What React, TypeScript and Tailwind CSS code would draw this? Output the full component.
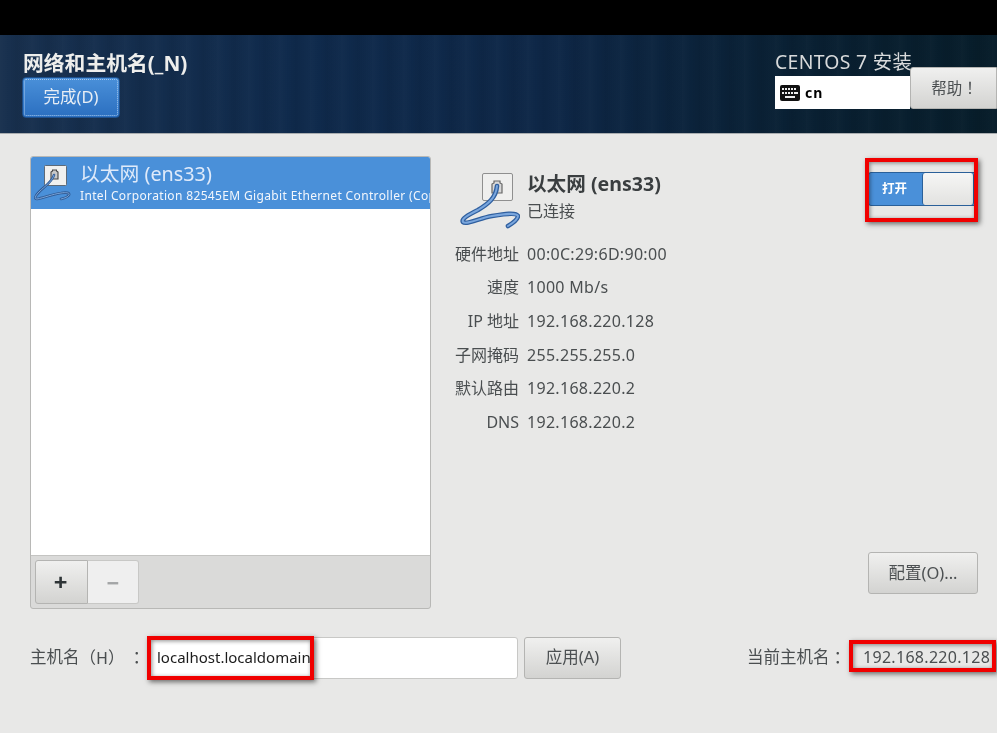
const FONT = "font-['Noto_Sans','Noto_Sans_CJK_SC',sans-serif]";
const TC = "font-['Noto_Sans_CJK_TC',sans-serif]";

function BigIcon() {
  const d = "M39 16C38 28 30 34 20 40C10 45 3 49 5 52C8 55 22 48 34 46C46 44 58 42 60 46C60 49 55 53 50 56";
  return (
    <svg viewBox="0 0 62 62" className="w-[62px] h-[62px]" fill="none">
      <rect x="24.5" y="3.5" width="30" height="27" rx="1.5" fill="#efefee" stroke="#8f8f8f" />
      <path d="M34 23v-9l2-1v-2h6v2l2 1v9z" fill="#d8d8d8" stroke="#666" strokeWidth="1.2" />
      <path d={d} stroke="#2f5f9f" strokeWidth="4.6" strokeLinecap="round" />
      <path d={d} stroke="#7aa6dd" strokeWidth="2" strokeLinecap="round" />
    </svg>
  );
}

function SmallIcon() {
  const d = "M21 13C19 20 12 24 6 30C2 34 1 37 4 37C10 36 20 32 28 31C34 30 37 31 36 33C35 35 32 36 28 37";
  return (
    <svg viewBox="0 0 49 49" className="w-[49px] h-[49px]" fill="none">
      <rect x="11.5" y="3.5" width="22" height="20" rx="1" fill="#f0f0ef" stroke="#5d6a78" />
      <path d="M18 17v-7l1.500-1v-1h4v1l1.500 1v7z" fill="#c8c8c8" stroke="#444" strokeWidth="1.100" />
      <path d={d} stroke="#2f5a94" strokeWidth="2.600" strokeLinecap="round" />
      <path d={d} stroke="#78a3d8" strokeWidth="1" strokeLinecap="round" />
    </svg>
  );
}

function Keyboard() {
  return (
    <svg viewBox="0 0 20 16" className="w-[20px] h-[16px]">
      <rect width="20" height="16" rx="2" fill="#111" />
      <g fill="#eee">
        <rect x="2" y="3" width="2" height="2" /><rect x="5" y="3" width="2" height="2" /><rect x="8" y="3" width="2" height="2" /><rect x="11" y="3" width="2" height="2" /><rect x="14" y="3" width="2" height="2" />
        <rect x="2" y="7" width="2" height="2" /><rect x="5" y="7" width="2" height="2" /><rect x="8" y="7" width="2" height="2" /><rect x="11" y="7" width="2" height="2" /><rect x="14" y="7" width="4" height="2" />
        <rect x="5" y="11" width="10" height="2" />
      </g>
    </svg>
  );
}

const BTN = "flex items-center justify-center rounded-[3px] border border-[#b4b4b2] bg-gradient-to-b from-[#f0f0ef] to-[#d3d3d1] text-[16.5px] text-[#4c5052]";
const RED = "absolute border-[4px] border-[#f00000] shadow-[2px_2px_5px_rgba(0,0,0,0.55),inset_1px_1px_4px_rgba(0,0,0,0.45)] pointer-events-none";

const rows: [string, string][] = [
  ["硬件地址", "00:0C:29:6D:90:00"],
  ["速度", "1000 Mb/s"],
  ["IP 地址", "192.168.220.128"],
  ["子网掩码", "255.255.255.0"],
  ["默认路由", "192.168.220.2"],
  ["DNS", "192.168.220.2"],
];

export default function App() {
  return (
    <div className={`${FONT} relative w-[997px] h-[733px] overflow-hidden bg-[#e8e8e7] flex flex-col blur-[0.4px]`}>
      <div className="h-[35px] bg-black shrink-0" />

      <header className="h-[99px] shrink-0 flex justify-between border-b border-[#a9adb0] bg-[repeating-linear-gradient(90deg,rgba(255,255,255,0.02)_0px,rgba(255,255,255,0)_9px,rgba(0,0,0,0.05)_17px,rgba(255,255,255,0.01)_31px),linear-gradient(90deg,#18304e_0%,#0f2a4c_30%,#0e2747_55%,#092033_80%,#071d2a_100%)]">
        <div className="pl-[22px] pt-[13px]">
          <div className="text-[20.8px] leading-[30px] font-bold text-[#eeeeec] pl-[1px]">网络和主机名(_N)</div>
          <button className="mt-[-1px] w-[98px] h-[41px] rounded-[4px] border border-[#1d4f8c] bg-gradient-to-b from-[#4a90d9] to-[#2b6fc0] text-[16.5px] text-[#e8eef5] outline-1 outline-dotted outline-[#a5c8ee] -outline-offset-3">完成(D)</button>
        </div>
        <div className="w-[222px] pt-[12px]">
          <div className="text-[19.4px] leading-[30px] text-[#d8dadb] tracking-[0.3px]">CENTOS 7 安装</div>
          <div className="flex items-start -mt-[10px]">
            <div className="mt-[9px] w-[135px] h-[33px] bg-white flex items-center gap-[5px] pl-[5px] text-[14px] font-bold text-black tracking-[1px]">
              <Keyboard />cn
            </div>
            <button className={`${BTN} ${TC} w-[87px] h-[42px] rounded-r-none !text-[15.5px] pl-[2px]`}>帮助！</button>
          </div>
        </div>
      </header>

      <main className="flex-1 flex flex-col pl-[30px] pt-[22px]">
        <div className="flex h-[453px]">
          <section className="w-[401px] flex flex-col rounded-[3px] border border-[#b8b8b6] bg-[#dadad9] overflow-hidden">
            <div className="flex-1 bg-white border-b border-[#c4c4c2]">
              <div className="h-[52px] bg-[#4a90d9] flex items-start text-white overflow-hidden">
                <div className="w-[49px] shrink-0 ml-[2px] mt-[5px] -mr-[2px]"><SmallIcon /></div>
                <div className="pt-[3px] whitespace-nowrap">
                  <div className="text-[19.8px] leading-[27px] text-[#dfeafa]">以太网 (ens33)</div>
                  <div className="text-[12px] leading-[17px] text-[#f2f6fc] tracking-[0.35px]">Intel Corporation 82545EM Gigabit Ethernet Controller (Copy)</div>
                </div>
              </div>
            </div>
            <div className="h-[52px] p-[4px] pb-[4px] flex items-start">
              <button className={`${BTN} w-[53px] h-[44px] rounded-r-none !text-[24px] font-bold !text-[#2e3436] pr-[2px]`}>+</button>
              <button className="w-[51px] h-[44px] rounded-r-[3px] border border-l-0 border-[#c8c8c6] bg-[#efefef] text-[22px] font-bold text-[#a3a5a6]">−</button>
            </div>
          </section>

          <section className="flex-1 flex flex-col relative">
            <div className="flex">
              <div className="ml-[27px] mt-[14px] w-[62px]"><BigIcon /></div>
              <div className="ml-[7px] pt-[15px]">
                <div className="text-[19.6px] leading-[26px] font-bold text-[#3a3e40]">以太网 (ens33)</div>
                <div className="text-[16px] leading-[24px] mt-[2px] text-[#4a4e50]">已连接</div>
              </div>
              <div className="ml-auto mr-[19px] mt-[16px] w-[110px] h-[34px] flex rounded-[3px] border border-[#2a6099] bg-[#4a90d9] overflow-hidden">
                <div className="w-[53px] text-white text-[12.5px] font-bold flex items-center pl-[13px]">打开</div>
                <div className="w-[52px] rounded-[3px] border-x border-[#2a6099] bg-gradient-to-b from-[#f6f6f5] to-[#e2e2e0]" />
              </div>
            </div>
            <dl className="mt-[5px] flex flex-col">
              {rows.map(([k, v]) => (
                <div key={k} className="h-[33.6px] flex items-center text-[16px] text-[#4a4e50]">
                  <dt className="w-[88px] text-right whitespace-nowrap">{k}</dt>
                  <dd className="ml-[8px] tracking-[0.3px]">{v}</dd>
                </div>
              ))}
            </dl>
            <button className={`${BTN} absolute left-[437px] top-[396px] w-[110px] h-[42px]`}>配置(O)...</button>
          </section>
        </div>

        <div className="mt-[28px] flex items-start h-[42px]">
          <label className="w-[117px] h-[40px] flex items-center text-[16.5px] text-[#4a4e50] whitespace-nowrap">主机名<span className={TC}>（H）</span><span className={`${TC} ml-[4px]`}>：</span></label>
          <div className="w-[371px] h-[42px] rounded-[3px] border border-[#c8c8c6] bg-white flex items-center pl-[9px] pb-[2px] text-[15px] text-[#1c1c1c]">localhost.localdomain</div>
          <button className={`${BTN} ml-[6px] w-[97px] h-[42px] pb-[2px]`}>应用(A)</button>
          <div className="ml-[126px] w-[116px] h-[40px] flex items-center text-[16.5px] text-[#4a4e50] whitespace-nowrap">当前主机名<span className={TC}>：</span></div>
          <div className="h-[40px] flex items-center text-[16px] text-[#4a4e50] tracking-[0.3px] whitespace-nowrap">192.168.220.128</div>
        </div>
      </main>

      <div className={`${RED} left-[865px] top-[158px] w-[113px] h-[64px]`} />
      <div className={`${RED} left-[147px] top-[636px] w-[167px] h-[44px]`} />
      <div className={`${RED} left-[849px] top-[640px] w-[147px] h-[32px]`} />
    </div>
  );
}
